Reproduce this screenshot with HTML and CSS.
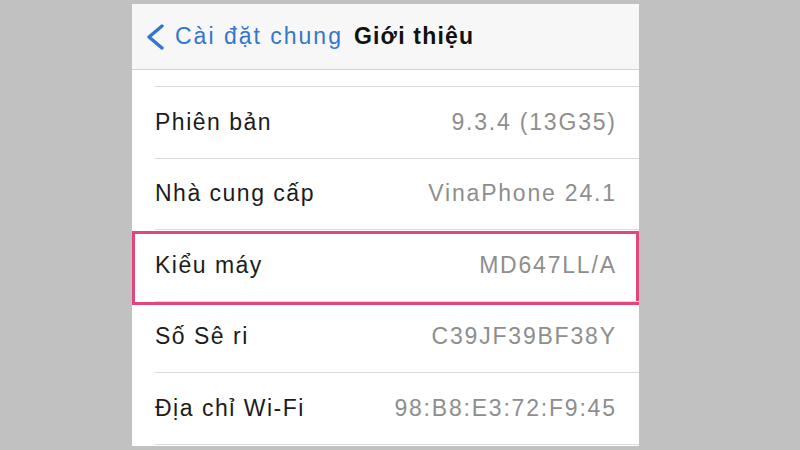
FILE: index.html
```html
<!DOCTYPE html>
<html lang="vi">
<head>
  <meta charset="UTF-8" />
  <meta name="viewport" content="width=device-width, initial-scale=1.0"/>
  <title>Giới thiệu</title>
  <link rel="stylesheet" href="styles.css">
</head>
<body>

  <!-- Phone screen -->
  <div class="screen">

    <!-- Navigation bar -->
    <div class="nav">
      <svg class="back-icon" width="20" height="26" viewBox="0 0 20 26">
        <path d="M17 2 L4 13 L17 24" fill="none" stroke="#3276cf" stroke-width="3.4" stroke-linecap="round" stroke-linejoin="round"/>
      </svg>
      <span class="back-text">Cài đặt chung</span>
      <span class="title">Giới thiệu</span>
    </div>

    <!-- Info list -->
    <div class="list">
      <div class="row">
        <span class="label">Phiên bản</span>
        <span class="value">9.3.4 (13G35)</span>
      </div>
      <div class="row">
        <span class="label">Nhà cung cấp</span>
        <span class="value">VinaPhone 24.1</span>
      </div>
      <div class="row highlight">
        <span class="label">Kiểu máy</span>
        <span class="value">MD647LL/A</span>
      </div>
      <div class="row">
        <span class="label">Số Sê ri</span>
        <span class="value">C39JF39BF38Y</span>
      </div>
      <div class="row">
        <span class="label">Địa chỉ Wi-Fi</span>
        <span class="value">98:B8:E3:72:F9:45</span>
      </div>
      <div class="row last"></div>
    </div>

  </div>

</body>
</html>
```

FILE: styles.css
```css
/* Page base */
body {
  margin: 0;
  background: #c1c1c1;
  font-family: "Liberation Sans", Arial, sans-serif;
}

/* Phone screen panel */
.screen {
  width: 507px;
  height: 442px;
  margin: 4px 0 0 132px;
  background: #fff;
  overflow: hidden;
}

/* Top navigation bar */
.nav {
  height: 65px;
  background: #f7f7f7;
  border-bottom: 1px solid #d2d2d2;
  display: flex;
  align-items: center;
  padding-left: 13px;
  font-size: 23px;
  letter-spacing: 2px;
}

.back-icon {
  margin-right: 10px;
}

.back-text {
  color: #3276cf;
  margin-right: 11px;
}

.title {
  color: #111;
  font-weight: bold;
  letter-spacing: 1.2px;
}

/* List of rows */
.list {
  padding-top: 16px;
  padding-left: 23px;
}

.row {
  height: 70.5px;
  border-top: 1px solid #dadada;
  display: flex;
  align-items: center;
  justify-content: space-between;
  padding-right: 24px;
  font-size: 23px;
  position: relative;
}

.label {
  color: #1c1c1c;
  letter-spacing: 1.5px;
}

.value {
  color: #8e8e8e;
  letter-spacing: 1.8px;
  margin-right: -1.8px;
}

/* Pink frame around the model row */
.highlight::after {
  content: "";
  position: absolute;
  left: -23px;
  right: 0;
  top: 1px;
  bottom: -4px;
  border: 3px solid #e2467c;
}
```
